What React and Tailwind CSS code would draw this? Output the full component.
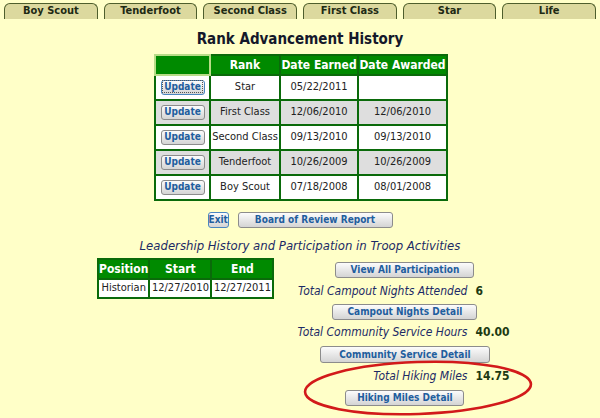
const FONT = { fontFamily: '"DejaVu Sans Condensed", "DejaVu Sans", Verdana, sans-serif' };

const tabs = ['Boy Scout', 'Tenderfoot', 'Second Class', 'First Class', 'Star', 'Life'];

const ranks = [
  { rank: 'Star', earned: '05/22/2011', awarded: '' },
  { rank: 'First Class', earned: '12/06/2010', awarded: '12/06/2010' },
  { rank: 'Second Class', earned: '09/13/2010', awarded: '09/13/2010' },
  { rank: 'Tenderfoot', earned: '10/26/2009', awarded: '10/26/2009' },
  { rank: 'Boy Scout', earned: '07/18/2008', awarded: '08/01/2008' },
];

function Btn({ children, className = '', focused = false }) {
  return (
    <button
      className={`rounded-[3px] border bg-linear-to-b from-[#fcfcfc] to-[#d4d4d4] text-[#1f5e9e] font-bold text-[10px] leading-none whitespace-nowrap ${
        focused ? 'border-[#4a86c0]' : 'border-[#8c8c8c]'
      } ${className}`}
    >
      <span className={focused ? 'outline-1 outline-dotted outline-[#555] px-[1px]' : ''}>{children}</span>
    </button>
  );
}

function Stat({ label, value }) {
  return (
    <div className="flex items-center h-[16px] w-full">
      <span className="w-[165px] shrink-0 flex justify-end whitespace-nowrap italic text-[12px] text-[#1c2a66]">{label}</span>
      <span className="ml-[8px] font-bold text-[12px] text-[#1d3a12] whitespace-nowrap">{value}</span>
    </div>
  );
}

export default function App() {
  return (
    <div className="relative w-[600px] h-[418px] bg-[#ffffc8] overflow-hidden" style={FONT}>
      {/* tabs */}
      <div className="flex pt-[3px] px-[4px] gap-[6px]">
        {tabs.map((t) => (
          <div
            key={t}
            className="w-[94px] h-[16px] bg-[#dcd99e] border border-b-0 border-[#4e5e2c] rounded-t-[6px] flex items-center justify-center text-[11px] font-bold text-[#1e2a14]"
          >
            {t}
          </div>
        ))}
      </div>

      <h1 className="mt-[10px] text-center text-[15px] font-bold text-[#14182a] leading-[20px]">
        Rank Advancement History
      </h1>

      {/* rank table */}
      <div className="flex justify-center mt-[5px] pl-[2px]">
        <table className="border-collapse border-2 border-[#0a6a0a] text-[11px] text-[#222]">
          <thead>
            <tr className="h-[20px] bg-[#008a00] text-white font-bold text-[12px]">
              <th className="w-[55px] border-2 border-[#b8dc88]"></th>
              <th className="w-[70px] border-2 border-[#0a6a0a]">Rank</th>
              <th className="w-[78px] border-2 border-[#0a6a0a]">Date Earned</th>
              <th className="w-[89px] border-2 border-[#0a6a0a]">Date Awarded</th>
            </tr>
          </thead>
          <tbody>
            {ranks.map((r, i) => (
              <tr key={r.rank} className={`h-[25px] ${i % 2 ? 'bg-[#dedede]' : 'bg-white'}`}>
                <td className="border-2 border-[#0a6a0a] text-center">
                  <Btn focused={i === 0} className="w-[44px] h-[15px]">Update</Btn>
                </td>
                <td className="border-2 border-[#0a6a0a] text-center">{r.rank}</td>
                <td className="border-2 border-[#0a6a0a] text-center">{r.earned}</td>
                <td className="border-2 border-[#0a6a0a] text-center">{r.awarded}</td>
              </tr>
            ))}
          </tbody>
        </table>
      </div>

      <div className="flex justify-center gap-[9px] mt-[11px]">
        <Btn className="w-[21px] h-[16px] !border-[#4a86c0]">Exit</Btn>
        <Btn className="w-[155px] h-[16px]">Board of Review Report</Btn>
      </div>

      <div className="mt-[9px] text-center italic text-[13px] text-[#1c2a66] leading-[18px]">
        Leadership History and Participation in Troop Activities
      </div>

      {/* bottom */}
      <div className="flex mt-[2px]">
        <div className="ml-[97px] pt-[1px]">
          <table className="border-collapse border-2 border-[#0a6a0a] text-[11px] text-[#222]">
            <thead>
              <tr className="h-[19px] bg-[#008a00] text-white font-bold text-[12px]">
                <th className="w-[51px] border-2 border-[#0a6a0a]">Position</th>
                <th className="w-[62px] border-2 border-[#0a6a0a]">Start</th>
                <th className="w-[62px] border-2 border-[#0a6a0a]">End</th>
              </tr>
            </thead>
            <tbody>
              <tr className="h-[19px] bg-white">
                <td className="border-2 border-[#0a6a0a] text-center">Historian</td>
                <td className="border-2 border-[#0a6a0a] text-center">12/27/2010</td>
                <td className="border-2 border-[#0a6a0a] text-center">12/27/2011</td>
              </tr>
            </tbody>
          </table>
        </div>

        <div className="ml-[28px] w-[205px] flex flex-col items-center">
          <Btn className="w-[139px] h-[16px] mt-[5px]">View All Participation</Btn>
          <div className="mt-[5px]"></div>
          <Stat label="Total Campout Nights Attended" value="6" />
          <Btn className="w-[145px] h-[16px] mt-[5px]">Campout Nights Detail</Btn>
          <div className="mt-[4px]"></div>
          <Stat label="Total Community Service Hours" value="40.00" />
          <Btn className="w-[170px] h-[17px] mt-[6px]">Community Service Detail</Btn>
          <div className="mt-[5px]"></div>
          <Stat label="Total Hiking Miles" value="14.75" />
          <Btn className="w-[119px] h-[16px] mt-[6px]">Hiking Miles Detail</Btn>
        </div>
      </div>

      {/* red annotation ellipse */}
      <svg className="absolute left-0 top-0 pointer-events-none" width="600" height="418">
        <ellipse
          cx="418"
          cy="388"
          rx="113"
          ry="26"
          transform="rotate(-2 418 388)"
          fill="none"
          stroke="#d21a1a"
          strokeWidth="2.6"
        />
      </svg>
    </div>
  );
}
